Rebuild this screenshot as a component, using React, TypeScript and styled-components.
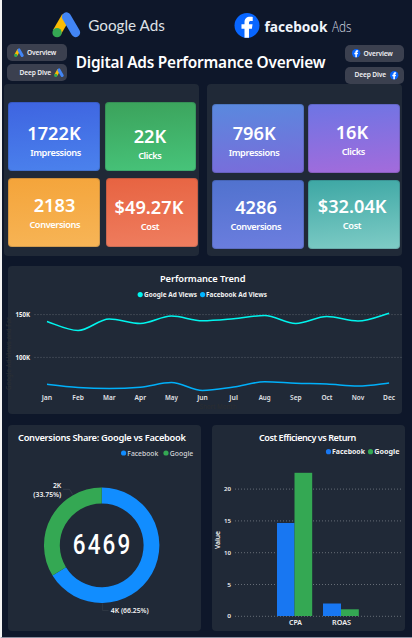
import React from "react";
import styled, { createGlobalStyle } from "styled-components";

const Global = createGlobalStyle`
  * { box-sizing: border-box; }
  html, body { margin: 0; background: #f3f3f3; }
  body { font-family: "Noto Sans", "Open Sans", sans-serif; overflow: hidden; }
  svg { display: block; flex: none; overflow: visible; }
`;

const Page = styled.main`
  width: 412px;
  height: 638px;
  border-left: 2px solid #f3f3f3;
  border-bottom: 1px solid #8b8fa0;
  background: #0e172a;
  color: #fff;
  overflow: hidden;
`;

const Brands = styled.header`
  display: flex;
  height: 44px;
  padding: 11px 0 0 50px;
`;

const FacebookBrand = styled.div`
  margin-left: 62.5px;
`;

const TitleRow = styled.div`
  display: grid;
  grid-template-columns: 60px 1fr 59px;
  height: 40px;
  padding: 0 8px 0 5px;
`;

const Nav = styled.nav<{ $top: number; $gap: number }>`
  display: flex;
  flex-direction: column;
  gap: ${(p) => p.$gap}px;
  padding-top: ${(p) => p.$top}px;
`;

const NavButton = styled.button<{ $pad: number; $gap: number }>`
  display: flex;
  align-items: center;
  flex: none;
  gap: ${(p) => p.$gap}px;
  width: 100%;
  height: 17px;
  padding: 0 0 0 ${(p) => p.$pad}px;
  border: 0;
  border-radius: 5px;
  background: #3b404f;
  color: #f1f1f4;
  font: 600 6.6px/10px "Noto Sans", sans-serif;
  letter-spacing: -0.12px;
  white-space: nowrap;
`;

const Title = styled.h1`
  margin: 0;
  padding: 8px 11px 0 0;
  text-align: center;
  font-size: 15.4px;
  line-height: 22px;
  font-weight: 600;
  letter-spacing: -0.22px;
  white-space: nowrap;
`;

const KpiRow = styled.section`
  display: flex;
  gap: 8px;
  padding-left: 2px;
`;

const KpiPanel = styled.div<{ $pad: string; $cols: string }>`
  display: grid;
  grid-template-columns: ${(p) => p.$cols};
  grid-auto-rows: 69px;
  justify-content: space-between;
  row-gap: 7px;
  width: 195px;
  height: 172px;
  padding: ${(p) => p.$pad};
  border-radius: 4px;
  background: #202937;
`;

const Card = styled.article<{ $from: string; $to: string; $top: number; $width?: number; $indent?: number }>`
  width: ${(p) => p.$width ?? 92}px;
  margin-left: ${(p) => p.$indent ?? 0}px;
  padding-top: ${(p) => p.$top}px;
  border-radius: 4px;
  background: linear-gradient(175deg, ${(p) => p.$from}, ${(p) => p.$to});
  box-shadow: inset 0 0 0 1px rgba(20, 30, 50, 0.16);
  text-align: center;
  white-space: nowrap;
`;

const Value = styled.div<{ $shift: number }>`
  padding-left: ${(p) => Math.max(0, p.$shift * 2)}px;
  padding-right: ${(p) => Math.max(0, -p.$shift * 2)}px;
  font-size: 18.2px;
  line-height: 20px;
  font-weight: 600;
`;

const Label = styled(Value)`
  margin-top: 4px;
  font-size: 9.2px;
  line-height: 12px;
  letter-spacing: -0.38px;
`;

const Panel = styled.section<{ $w: number; $h: number }>`
  width: ${(p) => p.$w}px;
  height: ${(p) => p.$h}px;
  border-radius: 4px;
  background: #202937;
`;

const Stack = styled.div`
  display: flex;
  flex-direction: column;
  gap: 11px;
  padding: 10px 0 0 6px;
`;

const Pair = styled.div`
  display: flex;
  gap: 11px;
`;

const PanelTitle = styled.h2<{ $left: number; $tight: number; $size?: number }>`
  margin: 0;
  padding: 6px 0 0 ${(p) => p.$left}px;
  font-size: ${(p) => p.$size ?? 9.3}px;
  line-height: 14px;
  font-weight: 600;
  letter-spacing: ${(p) => p.$tight}px;
  white-space: nowrap;
`;

type Anchor = "start" | "middle" | "end";
type LabelProps = { x: number; y: number; w: number; size?: number; anchor?: Anchor; weight?: number; fill?: string; children: string };

// Chart label drawn at a fixed width.
const ChartText = ({ x, y, w, size = 6.6, anchor = "start", weight = 600, fill = "#f2f2f2", children }: LabelProps) => (
  <text x={x} y={y} fontSize={size} fontWeight={weight} fill={fill} textAnchor={anchor} textLength={w} lengthAdjust="spacingAndGlyphs">
    {children}
  </text>
);

const GoogleAdsMark = ({ size }: { size: number }) => (
  <svg width={size} height={size * 0.93} viewBox="0 0 28 26">
    <path d="M13.6 5.2 4.9 20.3" stroke="#fbbc04" strokeWidth="8.8" />
    <path d="M13.9 5.6 22.8 20.8" stroke="#4285f4" strokeWidth="8.8" strokeLinecap="round" />
    <circle cx="4.9" cy="20.9" r="4.5" fill="#34a853" />
  </svg>
);

const FacebookMark = ({ size }: { size: number }) => (
  <svg width={size} height={size} viewBox="0 0 24 24">
    <circle cx="12" cy="12" r="12" fill="#0866ff" />
    <path d="M9.6 23.8v-8.6H6.7v-4.4h2.9V9c0-3.8 1.9-5.5 5.5-5.5.9 0 1.8.1 2.4.3v3.9h-1.7c-1.3 0-1.9.6-1.9 1.8v1.3h3.4l-.6 4.4h-2.8v8.6z" fill="#fff" />
  </svg>
);

type Kpi = { value: string; label: string; from: string; to: string; top: number; vs: number; ls: number; width?: number; indent?: number };

const googleKpis: Kpi[] = [
  { value: "1722K", label: "Impressions", from: "#3e64e0", to: "#4b82ed", top: 21, vs: 0, ls: 1.5 },
  { value: "22K", label: "Clicks", from: "#3ba25b", to: "#47c47a", top: 24, vs: -0.5, ls: -0.7, width: 91 },
  { value: "2183", label: "Conversions", from: "#f4a43a", to: "#f7b557", top: 17, vs: 0.5, ls: 0.8 },
  { value: "$49.27K", label: "Cost", from: "#e76341", to: "#ef7e60", top: 19, vs: -3, ls: -2, indent: 1 },
];

const facebookKpis: Kpi[] = [
  { value: "796K", label: "Impressions", from: "#5989de", to: "#7b6bda", top: 19, vs: -3.8, ls: -4 },
  { value: "16K", label: "Clicks", from: "#6d75e4", to: "#a46bdb", top: 18, vs: -2, ls: -0.7 },
  { value: "4286", label: "Conversions", from: "#5072ce", to: "#6d7edf", top: 17, vs: -2, ls: -2.2 },
  { value: "$32.04K", label: "Cost", from: "#3da7a4", to: "#7fccc6", top: 16, vs: -1.8, ls: -2 },
];

const Cards = ({ items }: { items: Kpi[] }) => (
  <>
    {items.map((k) => (
      <Card key={k.label} $from={k.from} $to={k.to} $top={k.top} $width={k.width} $indent={k.indent}>
        <Value $shift={k.vs}>{k.value}</Value>
        <Label $shift={k.ls}>{k.label}</Label>
      </Card>
    ))}
  </>
);

const months = ["Jan", "Feb", "Mar", "Apr", "May", "Jun", "Jul", "Aug", "Sep", "Oct", "Nov", "Dec"];
const monthWidths = [10.5, 11.5, 12.5, 11.5, 13, 10.5, 8.5, 12, 11.5, 11, 12.5, 12];
const googleViews = [55.5, 64.5, 53, 57.5, 50, 54.8, 52.8, 49.6, 57.5, 50.6, 55, 47.2];
const facebookViews = [118.3, 121.5, 122.4, 121.2, 116.6, 124.5, 121, 115.8, 117.2, 118, 120, 117];
const monthX = (i: number) => 39 + i * 31.1;

// Monotone cubic through the monthly points.
function smooth(ys: number[]): string {
  const dx = 31.1;
  const slope = ys.slice(1).map((y, i) => (y - ys[i]) / dx);
  const t = ys.map((_, i) => {
    if (i === 0) return slope[0] * 1.2;
    if (i === ys.length - 1) return slope[i - 1] * 1.2;
    const a = slope[i - 1];
    const b = slope[i];
    if (a * b <= 0) return 0;
    return Math.sign(a) * Math.min(Math.abs(a), Math.abs(b), Math.abs(a + b) / 4) * 2;
  });
  return ys.reduce((d, y, i) => {
    if (i === 0) return `M${monthX(0)} ${y}`;
    const c = dx / 3;
    return `${d}C${monthX(i - 1) + c} ${ys[i - 1] + t[i - 1] * c} ${monthX(i) - c} ${y - t[i] * c} ${monthX(i)} ${y}`;
  }, "");
}

const TrendChart = () => (
  <svg width="394" height="128" viewBox="0 20 394 128">
    <circle cx="132.2" cy="28.6" r="2.6" fill="#00f5ee" />
    <ChartText x={136} y={31} w={53} weight={700}>Google Ad Views</ChartText>
    <circle cx="194.6" cy="28.6" r="2.6" fill="#00b4ff" />
    <ChartText x={198} y={31} w={61} weight={700}>Facebook Ad Views</ChartText>
    {[["150K", 48.6], ["100K", 91.4]].map(([name, y]) => (
      <React.Fragment key={name}>
        <ChartText x={22} y={Number(y) + 2.3} w={14.6} size={6.2} anchor="end" weight={700}>{String(name)}</ChartText>
        <path d={`M26.5 ${y}H394`} stroke="#69707a" strokeWidth="0.8" strokeDasharray="1 2" />
      </React.Fragment>
    ))}
    <path d={smooth(googleViews)} fill="none" stroke="#00f5ee" strokeWidth="1.5" />
    <path d={smooth(facebookViews)} fill="none" stroke="#00b0fa" strokeWidth="1.5" />
    {months.map((m, i) => (
      <ChartText key={m} x={monthX(i)} y={133.8} w={monthWidths[i]} anchor="middle" fill="#e2e4e7">{m}</ChartText>
    ))}
    <g transform="rotate(-90 3.2 124)">
      <ChartText x={3.2} y={124} w={78} fill="#2b2f35" weight={500}>Google Ad Views and Fac...</ChartText>
    </g>
    <ChartText x={191.5} y={143.4} w={37} fill="#292c31" weight={500}>Short Month</ChartText>
  </svg>
);

const cx = 93.7;
const cy = 120.3;
const polar = (r: number, deg: number) => {
  const a = (deg * Math.PI) / 180;
  return `${cx + r * Math.sin(a)} ${cy - r * Math.cos(a)}`;
};
const ring = (from: number, to: number, outer = 57.7, inner = 41.9) => {
  const big = to - from > 180 ? 1 : 0;
  return `M${polar(outer, from)}A${outer} ${outer} 0 ${big} 1 ${polar(outer, to)}L${polar(inner, to)}A${inner} ${inner} 0 ${big} 0 ${polar(inner, from)}Z`;
};

const ShareChart = () => (
  <svg width="193" height="186" viewBox="0 20 193 186">
    <circle cx="115.6" cy="28" r="2.6" fill="#118dff" />
    <ChartText x={119.3} y={31} w={31} size={6.9} weight={500} fill="#d4d6d9">Facebook</ChartText>
    <circle cx="158" cy="28" r="2.6" fill="#34a853" />
    <ChartText x={161.8} y={31} w={23.4} size={6.9} weight={500} fill="#d4d6d9">Google</ChartText>
    <path d={ring(0, 238.5)} fill="#118dff" />
    <path d={ring(238.5, 360)} fill="#34a853" />
    <path d="M55 64.3h6.5l3 5" fill="none" stroke="#3a424e" strokeWidth="0.7" />
    <path d="M94.6 178.5v7h6" fill="none" stroke="#343c48" strokeWidth="0.7" />
    <ChartText x={53.3} y={63} w={8.4} size={6.5} anchor="end">2K</ChartText>
    <ChartText x={53.3} y={71.9} w={28} size={6.5} anchor="end">(33.75%)</ChartText>
    <ChartText x={102.8} y={187.8} w={38} size={6.5}>4K (66.25%)</ChartText>
    <text x="64.8" y="129" fontFamily="Roboto, sans-serif" fontSize="27" fontWeight="500" letterSpacing="2.6" fill="#fff" textLength="59.6" lengthAdjust="spacingAndGlyphs">
      6469
    </text>
  </svg>
);

const bars = [
  { x: 65, y: 98, w: 17.5, fill: "#1877f2" },
  { x: 82.5, y: 47.8, w: 17.7, fill: "#34a853" },
  { x: 111, y: 178.5, w: 18, fill: "#1877f2" },
  { x: 129, y: 184.3, w: 17.8, fill: "#34a853" },
];

const EfficiencyChart = () => (
  <svg width="193" height="186" viewBox="0 20 193 186">
    <circle cx="116.5" cy="26.7" r="2.6" fill="#1877f2" />
    <ChartText x={120} y={29.2} w={33} size={6.9} weight={700}>Facebook</ChartText>
    <circle cx="158.5" cy="26.7" r="2.6" fill="#34a853" />
    <ChartText x={162.3} y={29.2} w={25.2} size={6.9} weight={700}>Google</ChartText>
    {[0, 5, 10, 15, 20].map((v) => {
      const y = 191.3 - v * 6.36;
      return (
        <React.Fragment key={v}>
          <ChartText x={19} y={y + 2.1} w={v > 9 ? 7 : 3.8} size={6} anchor="end">{String(v)}</ChartText>
          <path d={`M23 ${y}H189`} stroke="#777d86" strokeWidth="0.8" strokeDasharray="1 2" />
        </React.Fragment>
      );
    })}
    {bars.map((b) => (
      <rect key={b.x} x={b.x} y={b.y} width={b.w} height={191 - b.y} fill={b.fill} />
    ))}
    <ChartText x={83.5} y={200} w={13} anchor="middle">CPA</ChartText>
    <ChartText x={129.5} y={200} w={19} anchor="middle">ROAS</ChartText>
    <g transform="rotate(-90 8 124)">
      <ChartText x={8} y={124} w={18}>Value</ChartText>
    </g>
  </svg>
);

export default function App() {
  return (
    <>
      <Global />
      <Page>
        <Brands>
          <GoogleAdsMark size={29} />
          <svg width="90" height="28" viewBox="0 0 90 28">
            <text x="7.3" y="19.7" fontFamily="Lato, sans-serif" fontSize="16" fill="#dfe1e5" textLength="76.5" lengthAdjust="spacingAndGlyphs">
              Google Ads
            </text>
          </svg>
          <FacebookBrand>
            <svg width="124" height="30" viewBox="0 0 124 30">
              <g transform="translate(0.5 2)">
                <FacebookMark size={25} />
              </g>
              <text x="30.4" y="21" fontSize="15" fontWeight="700" fill="#f0f4fb" textLength="63" lengthAdjust="spacingAndGlyphs">
                facebook
              </text>
              <text x="98" y="21" fontFamily="Open Sans, sans-serif" fontSize="14.5" fontWeight="300" fill="#d8dbe2" textLength="19.5" lengthAdjust="spacingAndGlyphs">
                Ads
              </text>
            </svg>
          </FacebookBrand>
        </Brands>
        <TitleRow>
          <Nav $top={0} $gap={3}>
            <NavButton $pad={7} $gap={3}><GoogleAdsMark size={10} />Overview</NavButton>
            <NavButton $pad={12.5} $gap={3}>Deep Dive<GoogleAdsMark size={10} /></NavButton>
          </Nav>
          <Title>Digital Ads Performance Overview</Title>
          <Nav $top={1} $gap={4.5}>
            <NavButton $pad={7} $gap={3}><FacebookMark size={8.4} />Overview</NavButton>
            <NavButton $pad={9.5} $gap={4}>Deep Dive<FacebookMark size={8.4} /></NavButton>
          </Nav>
        </TitleRow>
        <KpiRow>
          <KpiPanel $pad="18px 0 0 4px" $cols="92px 94px">
            <Cards items={googleKpis} />
          </KpiPanel>
          <KpiPanel $pad="20px 2px 0 5px" $cols="92px 92px">
            <Cards items={facebookKpis} />
          </KpiPanel>
        </KpiRow>
        <Stack>
          <Panel $w={394} $h={148}>
            <PanelTitle $left={152} $tight={-0.1}>Performance Trend</PanelTitle>
            <TrendChart />
          </Panel>
          <Pair>
            <Panel $w={193} $h={206}>
              <PanelTitle $left={10} $tight={-0.3}>Conversions Share: Google vs Facebook</PanelTitle>
              <ShareChart />
            </Panel>
            <Panel $w={193} $h={206}>
              <PanelTitle $left={47} $tight={-0.48} $size={9.1}>Cost Efficiency vs Return</PanelTitle>
              <EfficiencyChart />
            </Panel>
          </Pair>
        </Stack>
      </Page>
    </>
  );
}
